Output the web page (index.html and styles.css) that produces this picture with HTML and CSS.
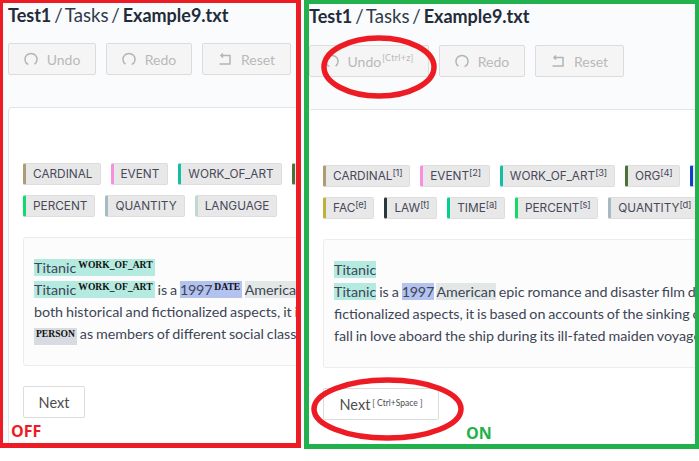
FILE: index.html
```html
<!DOCTYPE html>
<html lang="en">
<head>
<meta charset="utf-8">
<title>Annotation shortcuts</title>
<link rel="stylesheet" href="styles.css">
</head>
<body>
<main class="stage">
  <section class="panel panel-off">
    <header class="head">
      <h1 class="crumbs"><b>Test1</b> / Tasks / <b>Example9.txt</b></h1>
      <div class="actions">
        <button class="btn btn-undo" disabled><svg class="ico" viewBox="0 0 14 14"><path d="M3.4 12.2A6 6 0 1 1 10.6 12.2"/><path class="tip" d="M2.6 11.2l2 .2-.4 2z"/></svg>Undo</button>
        <button class="btn btn-redo" disabled><svg class="ico" viewBox="0 0 14 14"><path d="M3.4 12.2A6 6 0 1 1 10.6 12.2"/><path class="tip" d="M11.4 11.2l-2 .2.4 2z"/></svg>Redo</button>
        <button class="btn btn-reset" disabled><svg class="ico" viewBox="0 0 14 14"><path d="M3 3.5H12V12H1.5"/><path d="M5 1.5L3 3.5 5 5.5"/></svg>Reset</button>
      </div>
    </header>
    <div class="card">
      <div class="chips">
        <span class="chip c-card">CARDINAL</span>
        <span class="chip c-event">EVENT</span>
        <span class="chip c-work">WORK_OF_ART</span>
        <span class="chip c-org">ORG</span>
      </div>
      <div class="chips">
        <span class="chip c-pct">PERCENT</span>
        <span class="chip c-qty">QUANTITY</span>
        <span class="chip c-lang">LANGUAGE</span>
      </div>
      <div class="doc">
        <p class="line"><mark class="m-work">Titanic<sup class="tag">WORK_OF_ART</sup></mark></p>
        <p class="line"><mark class="m-work">Titanic<sup class="tag">WORK_OF_ART</sup></mark> is a <mark class="m-date">1997<sup class="tag">DATE</sup></mark> <mark class="m-norp">American</mark> epic romance and disaster film directed, written</p>
        <p class="line">both historical and fictionalized aspects, it is based on accounts of the sinking</p>
        <p class="line"><mark class="m-person"><sup class="tag">PERSON</sup></mark> as members of different social classes who fall in love</p>
      </div>
      <button class="next">Next</button>
    </div>
    <strong class="flag flag-off">OFF</strong>
  </section>

  <section class="panel panel-on">
    <header class="head">
      <h1 class="crumbs"><b>Test1</b> / Tasks / <b>Example9.txt</b></h1>
      <div class="actions">
        <button class="btn btn-undo-key" disabled><svg class="ico" viewBox="0 0 14 14"><path d="M3.4 12.2A6 6 0 1 1 10.6 12.2"/><path class="tip" d="M2.6 11.2l2 .2-.4 2z"/></svg>Undo<sup class="key">[Ctrl+z]</sup></button>
        <button class="btn btn-redo" disabled><svg class="ico" viewBox="0 0 14 14"><path d="M3.4 12.2A6 6 0 1 1 10.6 12.2"/><path class="tip" d="M11.4 11.2l-2 .2.4 2z"/></svg>Redo</button>
        <button class="btn btn-reset" disabled><svg class="ico" viewBox="0 0 14 14"><path d="M3 3.5H12V12H1.5"/><path d="M5 1.5L3 3.5 5 5.5"/></svg>Reset</button>
      </div>
    </header>
    <div class="card">
      <div class="chips">
        <span class="chip c-card">CARDINAL<sup>[1]</sup></span>
        <span class="chip c-event">EVENT<sup>[2]</sup></span>
        <span class="chip c-work">WORK_OF_ART<sup>[3]</sup></span>
        <span class="chip c-org">ORG<sup>[4]</sup></span>
        <span class="chip c-blue">GPE<sup>[5]</sup></span>
      </div>
      <div class="chips">
        <span class="chip c-fac">FAC<sup>[e]</sup></span>
        <span class="chip c-law">LAW<sup>[t]</sup></span>
        <span class="chip c-time">TIME<sup>[a]</sup></span>
        <span class="chip c-pct">PERCENT<sup>[s]</sup></span>
        <span class="chip c-qty">QUANTITY<sup>[d]</sup></span>
      </div>
      <div class="doc">
        <p class="line"><mark class="m-work">Titanic</mark></p>
        <p class="line"><mark class="m-work">Titanic</mark> is a <mark class="m-date">1997</mark> <mark class="m-norp">American</mark> epic romance and disaster film directed</p>
        <p class="line">fictionalized aspects, it is based on accounts of the sinking of the ship</p>
        <p class="line">fall in love aboard the ship during its ill-fated maiden voyage in 1912</p>
      </div>
      <button class="next next-key">Next<sup class="key">[ Ctrl+Space ]</sup></button>
    </div>
    <strong class="flag flag-on">ON</strong>
    <svg class="ring ring-undo" viewBox="0 0 116 64"><ellipse cx="58" cy="32" rx="55" ry="29"/></svg>
    <svg class="ring ring-next" viewBox="0 0 153 64"><ellipse cx="76.5" cy="32" rx="73.5" ry="29"/></svg>
  </section>
</main>
</body>
</html>
```
FILE: styles.css
```css
* { box-sizing: border-box; }
html, body { margin: 0; padding: 0; background: #fff; }
body { font-family: Lato, "Open Sans", sans-serif; color: #3c4657; }
.stage { display: flex; gap: 3px; width: 699px; height: 461px; align-items: flex-start; overflow: hidden; }

.panel { position: relative; overflow: hidden; background: #fafbfd; flex: none; }
.panel-off { width: 301px; height: 448px; border: solid #ed1c24; border-width: 3px 5px 5px 3px; padding-left: 5px; }
.panel-on { width: 395px; height: 449px; border: solid #22b14c; border-width: 4px 4px 5px 5px; }

.head { display: flow-root; height: 104px; }
.panel-on .head { height: 105px; }
.crumbs { margin: -1px 0 0; font-size: 18.6px; line-height: 26px; font-weight: 400; color: #2f3a4a; white-space: nowrap; word-spacing: -1.9px; }
.crumbs b { font-size: 18px; font-weight: 700; color: #222b38; }
.actions { display: flex; gap: 10px; margin-top: 15px; }
.panel-on .actions { margin-top: 16px; }

.btn { display: inline-flex; align-items: center; justify-content: center; gap: 9px; height: 32px; padding: 0; background: #f5f5f5; border: 1px solid #dcdcdc; border-radius: 2px; font: 400 14px Lato, sans-serif; color: #b9b9b9; white-space: nowrap; }
.btn-undo { width: 88px; }
.btn-redo { width: 86px; }
.btn-reset { width: 89px; }
.btn-undo-key { width: 120px; }
.ico { width: 14px; height: 14px; fill: none; stroke: #b4b4b4; stroke-width: 1.5; flex: none; }
.ico .tip { fill: #b4b4b4; stroke: none; }
.key { font-size: 8.5px; position: relative; margin-left: 1px; }
.btn .key { align-self: flex-start; top: 6px; margin-left: -8px; font-size: 9px; letter-spacing: .3px; }

.card { width: 700px; height: 340px; padding: 55px 0 0 14px; background: #fff; border: 1px solid #e3e3e3; border-radius: 4px; }
.panel-on .card { height: 350px; padding-left: 13px; border-right: 0; border-left-color: #fff; }

.chips { display: flex; gap: 10px; height: 22px; margin-bottom: 10px; }
.chip { display: block; height: 22px; padding: 0 7px 0 7px; background: #e8e8e8; border: 1px solid #dddddd; border-left: 3px solid #999; border-radius: 2px; font: 400 11.8px/21px Inter, "Open Sans", sans-serif; color: #47495a; white-space: nowrap; }
.chip sup { font-size: 9.4px; letter-spacing: -.3px; line-height: 0; vertical-align: 4px; }
.c-card { border-left-color: #b09a76; }
.c-event { border-left-color: #f78fe0; padding-right: 8px; }
.c-work { border-left-color: #12bfa3; }
.c-org { border-left-color: #4a7237; }
.c-blue { border-left-color: #0f3fd0; }
.c-pct { border-left-color: #12d96c; }
.c-qty { border-left-color: #a5bac2; }
.c-lang { border-left-color: #bfd8d0; }
.c-fac { border-left-color: #c2b03c; }
.c-law { border-left-color: #28383b; }
.c-time { border-left-color: #05cf90; }

.doc { width: 640px; height: 129px; margin-top: 20px; padding: 19px 10px; background: #fcfcfc; border: 1px solid #ececec; border-radius: 3px; }
.line { margin: 0; height: 22px; font-size: 14.3px; line-height: 22px; white-space: nowrap; word-spacing: -.8px; }
mark { color: inherit; padding: 0; }
.m-work { background: #b5eae0; }
.m-date { background: #b3c2ef; letter-spacing: -.2px; }
.m-norp { background: #e3e8e6; }
.m-person { background: #d8dce2; display: inline-block; height: 17px; vertical-align: -3px; line-height: 17px; }
.tag { font: 700 9.6px "Liberation Serif", serif; letter-spacing: 0; color: #111; margin: 0 2px; vertical-align: 5px; line-height: 0; }

.next { display: block; height: 32px; width: 62px; margin-top: 20px; padding: 0; background: #fff; border: 1px solid #dcdcdc; border-radius: 2px; font: 400 14.5px Lato, sans-serif; color: #4d4d4d; white-space: nowrap; }
.next-key { width: 116px; }
.next .key { vertical-align: 4px; line-height: 0; font-size: 8.5px; margin-left: 2px; }

.flag { position: absolute; font: 700 16px/20px "Open Sans", sans-serif; }
.flag-off { left: 8px; top: 418px; color: #ed1c24; }
.flag-on { left: 157px; top: 419px; color: #22b14c; }

.ring { position: absolute; fill: none; stroke: #ed1c24; stroke-width: 5.5; }
.ring-undo { left: 12px; top: 31px; width: 116px; height: 64px; }
.ring-next { left: 2px; top: 373px; width: 153px; height: 64px; }
```
